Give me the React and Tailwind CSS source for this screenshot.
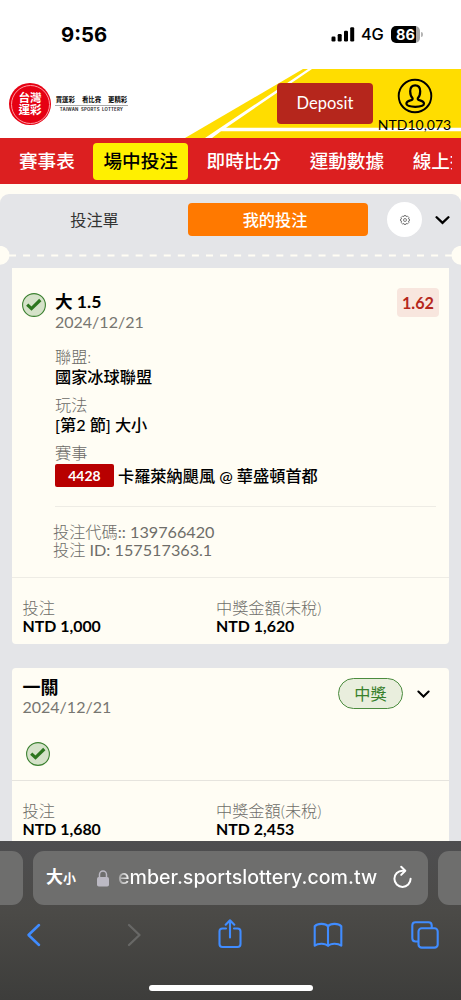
import React from 'react';

const navItems = ['賽事表', '場中投注', '即時比分', '運動數據', '線上投注'];

const StatusBar = () => (
  <div className="h-[69px] bg-white flex items-start justify-between pl-[61px] pr-[38px] pt-[21px] font-['Inter','Noto_Sans_CJK_TC',sans-serif]">
    <span className="text-[20.3px] leading-[27px] font-bold text-black">9:56</span>
    <div className="flex items-center h-[27px]">
      <svg width="24" height="15" viewBox="0 0 24 15" fill="#000">
        <rect x="0.5" y="9.5" width="4" height="5" rx="1.2" />
        <rect x="6.7" y="7" width="4" height="7.5" rx="1.2" />
        <rect x="13" y="3.7" width="4" height="10.8" rx="1.2" />
        <rect x="19.2" y="0.3" width="4" height="14.2" rx="1.2" />
      </svg>
      <span className="ml-[6px] w-[23px] text-[16.4px] font-medium leading-[27px] tracking-[-0.2px] text-black">4G</span>
      <div className="ml-[7px] w-[29px] h-[17px] rounded-[5px] bg-[linear-gradient(90deg,#000_86%,#a8a8a8_86%)] text-white text-[14.5px] leading-[17px] font-bold text-center">
        86
      </div>
      <span className="ml-px w-[2px] h-[5px] rounded-r bg-[#b4b4b4]"></span>
    </div>
  </div>
);

const Logo = () => (
  <div className="flex items-center mt-[14px] h-[42px]">
    <div className="w-[42px] h-[42px] rounded-full bg-[#e60012] p-[1.5px]">
      <div className="w-full h-full rounded-full border border-[#ff9aa0] flex flex-col items-center justify-center text-white font-bold text-[11.6px] leading-[12.5px]">
        <span>台灣</span>
        <span>運彩</span>
      </div>
    </div>
    <div className="ml-1 -mt-px w-[73px] flex flex-col items-center">
      <div className="flex gap-[7px] text-[6.4px] leading-[9px] font-bold text-black whitespace-nowrap">
        <span>買運彩</span>
        <span>看比賽</span>
        <span>更精彩</span>
      </div>
      <div className="w-full h-px bg-[#aaa] mt-px"></div>
      <div className="text-[4.3px] leading-[7px] font-bold text-[#333] whitespace-nowrap tracking-[0.2px] font-['Inter',sans-serif]">
        TAIWAN&nbsp; SPORTS&nbsp; LOTTERY
      </div>
    </div>
  </div>
);

const Header = () => (
  <header className="relative h-[69px] bg-white flex justify-between pl-[9px] pr-[9px]">
    <svg className="absolute left-0 top-0" width="461" height="69" viewBox="0 0 461 69">
      <path d="M303 0H461V69H185Z" fill="#ffdd00" />
      <path d="M308 0H312L226 58.7H461V62.3H221L212 69H205Z" fill="#fff" />
    </svg>
    <Logo />
    <div className="relative flex">
      <button className="mt-[14px] w-[96px] h-[41px] rounded-[4px] bg-[#b5261c] text-white text-[16.5px]">
        Deposit
      </button>
      <div className="ml-[4px] w-[75px] flex flex-col items-center pt-[9px]">
        <svg width="36" height="36" viewBox="0 0 36 36" fill="none" stroke="#000">
          <circle cx="18" cy="18" r="16.3" strokeWidth="1.9" />
          <path
            d="M15.6 20.2C14.2 18.8 13.2 16.5 13.2 13.2C13.2 9.4 15 7.3 18.2 7.3S23.2 9.4 23.2 13.2C23.2 16.5 22.2 18.8 20.8 20.2C20.5 21.5 21.2 21.9 23 22.4C26 23.2 27 24 27 25.6C27 27.8 22.7 28.8 18.2 28.8S9.4 27.8 9.4 25.6C9.4 24 10.4 23.2 13.4 22.4C15.2 21.9 15.9 21.5 15.6 20.2Z"
            strokeWidth="2.2"
          />
        </svg>
        <span className="text-[14px] leading-[16px] mt-[3px] text-black whitespace-nowrap">NTD10,073</span>
      </div>
    </div>
  </header>
);

const Nav = () => (
  <nav className="h-[46px] bg-[#dc1f20] pl-[9px] pr-[9px] flex items-center">
    <div className="flex gap-[8.7px] w-full overflow-hidden">
      {navItems.map((item, i) => (
        <span
          key={item}
          className={`shrink-0 h-[37px] px-[10px] rounded-[4px] text-[18.6px] leading-[36px] font-medium whitespace-nowrap ${
            i === 1 ? 'bg-[#fff000] text-black' : 'text-white'
          }`}
        >
          {item}
        </span>
      ))}
    </div>
  </nav>
);

const Chevron = ({ size }) => (
  <svg width={size} height={size} viewBox="0 0 14 14" fill="none" stroke="#000" strokeWidth="2.2">
    <path d="M1.5 4.9L7 10.2L12.5 4.9" strokeLinecap="round" />
  </svg>
);

const Gear = () => (
  <svg width="10" height="10" viewBox="0 0 20 20" fill="none" stroke="#555" strokeWidth="1.5" strokeLinejoin="round">
    <path d="M8.2 1H11.8L12.3 3.4L15 2.2L17.8 5L16.6 7.7L19 8.2V11.8L16.6 12.3L17.8 15L15 17.8L12.3 16.6L11.8 19H8.2L7.7 16.6L5 17.8L2.2 15L3.4 12.3L1 11.8V8.2L3.4 7.7L2.2 5L5 2.2L7.7 3.4Z" />
    <circle cx="10" cy="10" r="3" />
  </svg>
);

const CheckIcon = () => (
  <svg width="24" height="24" viewBox="0 0 24 24" fill="none">
    <circle cx="12" cy="12" r="11.4" fill="#d5e2c9" stroke="#3c8131" strokeWidth="1.1" />
    <path d="M5.2 11.6L9.5 15.6L18.3 7" stroke="#2d761f" strokeWidth="3.2" />
  </svg>
);

const Totals = ({ stake, payout }) => (
  <div className="flex pl-[10.5px] pt-[21px] leading-[17.5px]">
    <div className="w-[193.5px]">
      <div className="font-light text-[#6e6d69]">投注</div>
      <div className="font-bold text-[15.9px]">{stake}</div>
    </div>
    <div>
      <div className="font-light text-[#6e6d69]">中獎金額(未稅)</div>
      <div className="font-bold text-[15.9px]">{payout}</div>
    </div>
  </div>
);

const Detail = ({ label, children }) => (
  <div className="h-[48px]">
    <div className="font-light text-[#6b6a66] leading-[20px]">{label}</div>
    <div className="font-medium leading-[20px]">{children}</div>
  </div>
);

const PanelHeader = () => (
  <div className="relative h-[74px]">
    <div className="flex items-center pt-[8px] pl-[10px]">
      <span className="w-[169px] text-center text-[16.2px] leading-[34px] text-[#333]">投注單</span>
      <button className="ml-[9px] w-[180px] h-[33px] rounded-[4px] bg-[#ff7900] text-white text-[16.2px] leading-[33px] font-medium pr-[6px]">
        我的投注
      </button>
      <div className="ml-[19px] w-[35px] h-[35px] rounded-full bg-white flex items-center justify-center">
        <Gear />
      </div>
      <div className="ml-[13px]">
        <Chevron size={15} />
      </div>
    </div>
    <svg className="absolute left-0 bottom-0" width="461" height="22" viewBox="0 0 461 22">
      <circle cx="0" cy="9.3" r="9.5" fill="#fffdf4" />
      <circle cx="461" cy="9.3" r="9.5" fill="#fffdf4" />
      <path d="M9 9.5H452" stroke="#fffdf4" strokeWidth="2" strokeDasharray="7 7.07" />
    </svg>
  </div>
);

const BetCard = () => (
  <section className="h-[376px] rounded-b-[4px] bg-[#fffdf4]">
    <div className="h-[310px] border-b border-[#eeece5] pt-[21px] pl-[10px] pr-[10px] flex">
      <div className="mt-[4px] w-[33px] shrink-0">
        <CheckIcon />
      </div>
      <div className="flex-1">
        <div className="flex justify-between h-[55px]">
          <div>
            <div className="font-bold text-[17.6px] leading-[20px] pt-[3px]">大 1.5</div>
            <div className="leading-[20px] text-[#777671] text-[16px]">2024/12/21</div>
          </div>
          <div className="-mt-px w-[42px] h-[29px] rounded-[4px] bg-[#f8e6de] text-[#b5261c] font-bold leading-[30px] text-center">
            1.62
          </div>
        </div>
        <div className="pt-[3px]">
          <Detail label="聯盟:">國家冰球聯盟</Detail>
          <Detail label="玩法">[第2 節] 大小</Detail>
          <Detail label="賽事">
            <div className="flex items-center h-[25px]">
              <span className="w-[59px] h-[23px] mr-[4px] rounded-[2px] bg-[#b80000] text-white text-[14px] leading-[23px] font-bold text-center">
                4428
              </span>
              <span>卡羅萊納颶風 @ 華盛頓首都</span>
            </div>
          </Detail>
        </div>
        <div className="mt-[15px] mr-[3px] border-t border-[#eeece5]"></div>
        <div className="-ml-[2px] pt-[16px] leading-[17.5px] text-[#6e6d69]">
          <div>
            <span className="font-light">投注代碼</span>:: 139766420
          </div>
          <div>
            <span className="font-light">投注</span> ID: 157517363.1
          </div>
        </div>
      </div>
    </div>
    <Totals stake="NTD 1,000" payout="NTD 1,620" />
  </section>
);

const ParlayCard = () => (
  <section className="mt-[24px] h-[200px] rounded-t-[4px] bg-[#fffdf4]">
    <div className="h-[113px] border-b border-[#e6e4de]">
      <div className="flex justify-between pl-[10.5px] pr-[19px] pt-[10px]">
        <div>
          <div className="font-bold text-[18px] leading-[19px]">一關</div>
          <div className="leading-[19px] text-[#777671] text-[16px]">2024/12/21</div>
        </div>
        <div className="flex items-center h-[31px]">
          <div className="w-[65px] h-[31px] rounded-full border border-[#4b8b3e] bg-[#e9eedd] text-[#38802c] leading-[29px] text-center">
            中獎
          </div>
          <div className="ml-[14px]">
            <Chevron size={13} />
          </div>
        </div>
      </div>
      <div className="pl-[14px] pt-[26px]">
        <CheckIcon />
      </div>
    </div>
    <Totals stake="NTD 1,680" payout="NTD 2,453" />
  </section>
);

const BrowserBar = () => (
  <footer className="h-[159px] bg-[linear-gradient(180deg,#4e4e50_0%,#4b4a47_45%,#3d3d3b_100%)] font-['Inter','Noto_Sans_CJK_TC',sans-serif]">
    <div className="flex pt-[10px]">
      <div className="w-[23px] h-[54px] rounded-r-[11px] bg-[#6e6e6d]"></div>
      <div className="mx-[10px] w-[395px] h-[54px] rounded-[11px] bg-[#6e6e6d] flex items-center pl-[13px] text-white">
        <span className="flex items-baseline font-bold w-[32px] whitespace-nowrap">
          <span className="text-[17px]">大</span>
          <span className="text-[13px]">小</span>
        </span>
        <svg className="ml-[19px]" width="12" height="17" viewBox="0 0 12 17" fill="none">
          <rect x="0" y="7" width="12" height="9.5" rx="1.8" fill="#bbb9c3" />
          <path d="M2.5 8V4.5a3.5 3.5 0 0 1 7 0V8" stroke="#bbb9c3" strokeWidth="1.5" />
        </svg>
        <span className="ml-[9px] w-[259px] text-[19.6px] font-medium whitespace-nowrap bg-[linear-gradient(90deg,#999_0,#fff_12px)] bg-clip-text text-transparent">
          ember.sportslottery.com.tw
        </span>
        <svg className="ml-[15px] -mt-[3px]" width="22" height="24" viewBox="0 0 22 24" fill="none" stroke="#fff" strokeWidth="2">
          <path d="M12.2 5.7H10.5A8.1 8.1 0 1 0 18.6 13.8" strokeLinecap="round" />
          <path d="M9.2 1.8L13.3 5.8L9.2 9.9" strokeLinecap="round" strokeLinejoin="round" />
        </svg>
      </div>
      <div className="w-[23px] h-[54px] rounded-l-[11px] bg-[#6e6e6d]"></div>
    </div>
    <div className="flex items-center h-[60px] pl-[26px]">
      <svg width="16" height="24" viewBox="0 0 16 24" fill="none" stroke="#408cff" strokeWidth="2.5" strokeLinecap="round" strokeLinejoin="round">
        <path d="M13 2L2.5 12L13 22" />
      </svg>
      <svg className="ml-[84px]" width="16" height="24" viewBox="0 0 16 24" fill="none" stroke="#686866" strokeWidth="2.3" strokeLinecap="round" strokeLinejoin="round">
        <path d="M3 2L13.5 12L3 22" />
      </svg>
      <svg className="ml-[76px] -mt-[2px]" width="24" height="30" viewBox="0 0 24 30" fill="none" stroke="#408cff" strokeWidth="2.1" strokeLinecap="round" strokeLinejoin="round">
        <path d="M8 9.5H4.5Q1.5 9.5 1.5 12.5V25Q1.5 28 4.5 28H19.5Q22.5 28 22.5 25V12.5Q22.5 9.5 19.5 9.5H16" />
        <path d="M12 18.5V1.5M7.7 5.7L12 1.3L16.3 5.7" />
      </svg>
      <svg className="ml-[71px]" width="30" height="26" viewBox="0 0 30 26" fill="none" stroke="#408cff" strokeWidth="2.1" strokeLinejoin="round">
        <path d="M15 4.3C12.6 1.3 4.8 0.9 1.7 4.3V23.7C5 21 12.4 21.1 15 23.9C17.6 21.1 25 21 28.3 23.7V4.3C25.2 0.9 17.4 1.3 15 4.3V23.9" />
      </svg>
      <svg className="ml-[68px]" width="28" height="28" viewBox="0 0 28 28" fill="none" stroke="#408cff" strokeWidth="2.1">
        <path d="M7.5 20.5H4.5Q1.3 20.5 1.3 17.3V4.5Q1.3 1.3 4.5 1.3H17.5Q20.7 1.3 20.7 4.5V7.5" />
        <rect x="7.5" y="7.3" width="19.2" height="19.3" rx="3.2" />
      </svg>
    </div>
    <div className="mx-auto mt-[20px] w-[164px] h-[6px] rounded-full bg-white"></div>
  </footer>
);

const App = () => {
  return (
    <div className="w-[461px] h-[1000px] overflow-hidden bg-[#fffdf4] font-['Lato','Noto_Sans_CJK_TC',sans-serif] text-black">
      <StatusBar />
      <Header />
      <Nav />
      <main className="mt-[10px] h-[647px] overflow-hidden rounded-t-[9px] bg-[#e4e5e8] text-[16.2px]">
        <PanelHeader />
        <div className="ml-[12px] mr-[12px]">
          <BetCard />
          <ParlayCard />
        </div>
      </main>
      <BrowserBar />
    </div>
  );
};

export default App;
